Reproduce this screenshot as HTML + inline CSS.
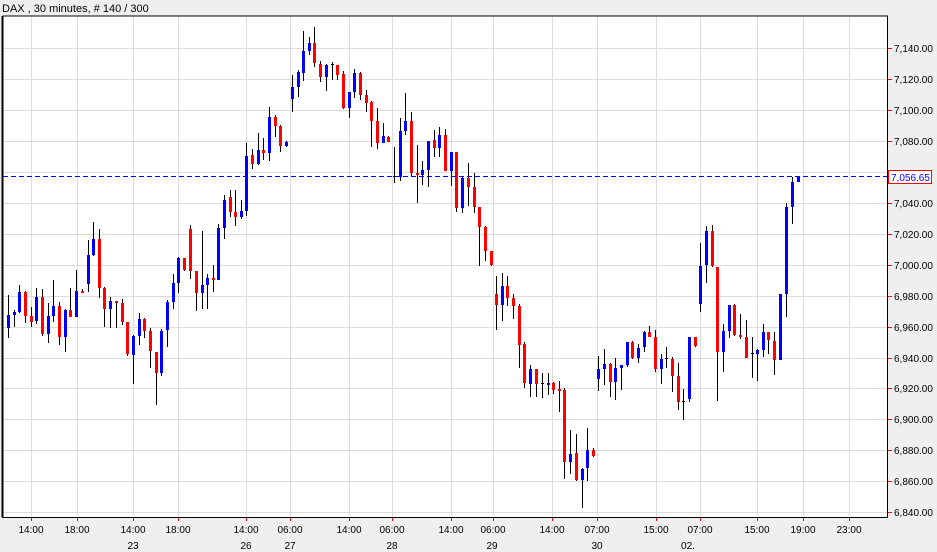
<!DOCTYPE html>
<html><head><meta charset="utf-8"><style>
html,body{margin:0;padding:0;background:#efefef;}
body{width:937px;height:552px;overflow:hidden;position:relative;font-family:"Liberation Sans",sans-serif;}
svg{position:absolute;left:0;top:0;}
</style></head><body>
<svg id="s" width="937" height="552" xmlns="http://www.w3.org/2000/svg" font-family="Liberation Sans, sans-serif">
<rect x="0" y="0" width="937" height="552" fill="#efefef"/>
<text x="2" y="12" font-size="11" fill="#000">DAX , 30 minutes, # 140 / 300</text>
<rect x="2.5" y="16" width="885" height="501" fill="#fff"/>
<g id="grid" stroke="#dcdcdc" stroke-width="1"></g>
<g id="c"></g>
<line x1="3" y1="176.5" x2="887" y2="176.5" stroke="#0000ff" stroke-dasharray="5,3"/>
<path d="M2.5 16 V517.5 H887.5 V16 H2.5" fill="none" stroke="#000" stroke-width="1"/>
<line x1="2.5" y1="16" x2="2.5" y2="517" stroke="#000" stroke-width="2"/>
<g id="ax" font-size="10" fill="#000"></g>
<rect x="888.5" y="170.5" width="43" height="13" fill="#fff" stroke="#ff0000"/>
<text x="891" y="181" font-size="10" fill="#0000ff">7,056.65</text>
</svg>
<script>
var NS="http://www.w3.org/2000/svg";
function el(p,t,a,txt){var e=document.createElementNS(NS,t);for(var k in a)e.setAttribute(k,a[k]);if(txt)e.textContent=txt;p.appendChild(e);return e;}
var g=document.getElementById('grid'),ax=document.getElementById('ax'),cg=document.getElementById('c');
var vx=[31,77,133,178,246,290,349,392,451,493,552,597,656,700,757,803,849];
var tl=["14:00","18:00","14:00","18:00","14:00","06:00","14:00","06:00","14:00","06:00","14:00","07:00","15:00","07:00","15:00","19:00","23:00"];
vx.forEach(function(x,i){el(g,'line',{x1:x+.5,y1:17,x2:x+.5,y2:517,});el(ax,'line',{x1:x+.5,y1:518,x2:x+.5,y2:521,stroke:'#f00'});el(ax,'text',{x:x,y:533,'text-anchor':'middle'},tl[i]);});
[[133,"23"],[246,"26"],[290,"27"],[392,"28"],[492,"29"],[597,"30"],[688,"02."]].forEach(function(d){el(ax,'text',{x:d[0],y:549,'text-anchor':'middle'},d[1]);});
for(var i=0;i<16;i++){var y=Math.round(48+i*30.95);var p=7140-i*20;el(g,'line',{x1:3,y1:y+.5,x2:887,y2:y+.5});
el(ax,'line',{x1:888,y1:y+.5,x2:892,y2:y+.5,stroke:'#f00'});
if(i!=4)el(ax,'text',{x:894,y:y+4},(p+'').replace(/^(\d)/,'$1,')+'.00');}
var D=[
[8,295,338,315,328,'b'],[14,310,327,312,315,'b'],[19,285,313,292,312,'b'],[25,291,323,292,316,'r'],[31,307,327,316,322,'r'],[36,288,324,297,321,'b'],[42,289,336,297,334,'r'],[48,303,343,316,334,'b'],[53,280,322,306,316,'b'],[59,302,345,306,337,'r'],[65,309,352,310,337,'b'],[70,288,317,310,317,'r'],[76,270,317,291,317,'b'],[82,289,293,291,293,'r'],[88,240,292,255,284,'b'],[93,222,256,239,255,'b'],[99,229,298,239,288,'r'],[104,287,327,288,309,'r'],[110,297,328,301,309,'b'],[116,301,328,301,303,'r'],[122,299,325,303,322,'r'],[127,322,356,322,354,'r'],[133,335,384,336,355,'b'],[139,313,345,319,336,'b'],[144,318,338,319,331,'r'],[150,328,368,331,351,'r'],[156,352,405,352,373,'r'],[161,329,376,331,373,'b'],[167,300,347,302,330,'b'],[173,274,309,283,302,'b'],[178,257,293,258,283,'b'],[184,258,271,258,270,'r'],[190,225,279,229,271,'r'],[196,271,311,271,293,'r'],[202,231,309,285,293,'b'],[207,274,309,278,285,'b'],[213,265,292,278,280,'r'],[218,224,280,228,280,'b'],[224,195,239,200,228,'b'],[230,190,217,197,212,'r'],
[235,190,226,212,217,'r'],[241,200,219,211,217,'b'],[246,143,216,156,211,'b'],[252,149,169,155,164,'r'],[258,133,165,150,164,'b'],[263,138,160,150,153,'r'],[269,107,161,117,153,'b'],[275,115,137,117,126,'r'],[280,125,152,126,146,'r'],[286,141,147,142,146,'b'],[292,75,112,87,99,'b'],[298,70,97,72,87,'b'],[303,31,81,51,73,'b'],[309,37,55,43,51,'b'],[314,27,67,43,63,'r'],[320,61,82,64,77,'r'],[326,64,91,65,77,'b'],[332,62,80,64,65,'k'],[337,65,80,65,75,'r'],[343,71,109,74,108,'r'],[349,92,118,92,108,'b'],[354,69,98,73,92,'b'],[360,72,100,73,95,'r'],[366,90,112,95,103,'r'],[371,101,147,102,121,'r'],[377,108,149,121,143,'r'],[383,123,143,136,143,'b'],[388,136,142,137,142,'r'],[394,147,183,176,177,'k'],[400,118,181,131,177,'b'],[405,93,135,121,131,'b'],[411,112,176,121,173,'r'],[417,145,203,173,175,'r'],[422,161,185,170,175,'b'],[428,141,187,141,170,'b'],[434,130,157,140,148,'r'],[439,127,157,135,148,'b'],[445,129,171,135,171,'r'],[451,152,186,152,171,'b'],[456,152,212,152,208,'r'],[462,177,213,178,208,'b'],[468,163,206,178,187,'r'],[474,173,213,187,207,'r'],[479,207,266,207,227,'r'],[485,226,261,227,251,'r'],[491,251,266,251,265,'r'],
[496,276,330,294,305,'r'],[502,273,321,286,305,'b'],[507,276,306,286,298,'r'],[513,294,319,298,306,'r'],[519,304,368,306,345,'r'],[524,342,388,344,383,'r'],[530,365,397,369,384,'b'],[536,369,397,369,384,'r'],[542,373,398,383,384,'k'],[548,373,395,383,384,'b'],[553,382,394,383,390,'r'],[559,381,412,389,390,'r'],[564,388,479,390,462,'r'],[570,430,474,454,462,'b'],[576,434,481,453,480,'r'],[582,468,508,469,480,'b'],[587,428,481,450,468,'b'],[593,448,457,450,456,'r'],
[598,356,391,369,379,'b'],[604,349,385,364,369,'b'],[610,363,397,364,382,'r'],[615,358,400,368,382,'b'],[621,365,390,365,368,'b'],[627,342,367,342,365,'b'],[632,341,359,342,358,'r'],[638,344,363,348,358,'b'],[644,331,352,332,347,'b'],[649,326,337,332,337,'r'],[655,330,372,337,369,'r'],[661,354,384,359,369,'b'],[666,347,368,358,359,'k'],[672,357,392,359,376,'r'],[678,363,410,376,402,'r'],[683,389,420,401,402,'k'],[689,337,402,337,399,'b'],[695,337,347,337,346,'r'],
[700,243,312,266,304,'b'],[706,226,283,231,265,'b'],[712,225,267,231,266,'r'],[717,267,401,267,352,'r'],[723,324,372,331,352,'b'],[729,305,338,305,331,'b'],[734,304,336,305,335,'r'],[740,314,339,335,337,'r'],[746,320,358,337,358,'r'],[752,337,378,353,354,'k'],[757,349,381,350,354,'b'],[763,324,357,332,350,'b'],[768,332,354,332,340,'r'],[774,332,375,341,360,'r'],[780,294,360,294,360,'b'],[786,203,317,207,294,'b'],[792,177,224,182,207,'b'],[798,176,182,177,182,'b']];
var col={b:'#0000ff',r:'#ff0000',k:'#000'};
D.forEach(function(d){var x=d[0];el(cg,'line',{x1:x+.5,y1:d[1],x2:x+.5,y2:d[2],stroke:'#000','stroke-width':1});
if(d[5]=='k'){el(cg,'line',{x1:x-1,y1:d[3]+.5,x2:x+2,y2:d[3]+.5,stroke:'#000'});}
else el(cg,'rect',{x:x-1,y:d[3],width:3,height:Math.max(2,d[4]-d[3]),fill:col[d[5]]});});
</script>
</body></html>
